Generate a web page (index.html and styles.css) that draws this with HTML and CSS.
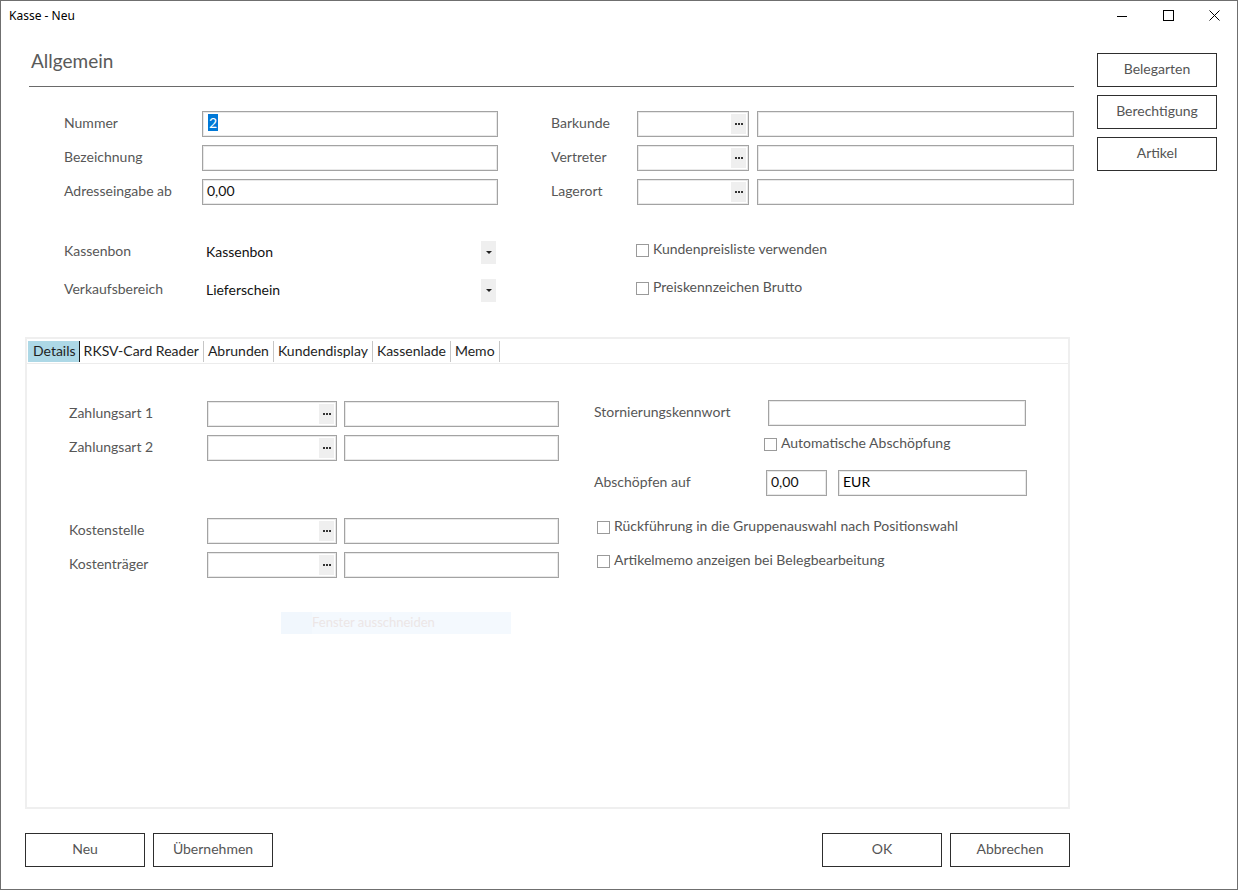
FILE: index.html
```html
<!DOCTYPE html>
<html lang="de">
<head>
<meta charset="utf-8">
<title>Kasse - Neu</title>
<link rel="stylesheet" href="styles.css">
</head>
<body>
<div class="window">
  <div class="titlebar">
    <span class="title">Kasse - Neu</span>
    <div class="controls">
      <span class="ctl"><svg width="10" height="10" viewBox="0 0 10 10"><path d="M0 5.5H10" stroke="#000" stroke-width="1"/></svg></span>
      <span class="ctl"><svg width="11" height="11" viewBox="0 0 11 11"><rect x="0.5" y="0.5" width="10" height="10" fill="none" stroke="#000" stroke-width="1"/></svg></span>
      <span class="ctl"><svg width="11" height="11" viewBox="0 0 11 11"><path d="M0.5 0.5L10.5 10.5M10.5 0.5L0.5 10.5" stroke="#000" stroke-width="1"/></svg></span>
    </div>
  </div>

  <div class="content">
    <div class="top">
      <div class="general">
        <h1 class="heading">Allgemein</h1>
        <div class="fields">
          <div class="row">
            <span class="lbl lbl-l">Nummer</span>
            <div class="input w296"><span class="sel">2</span></div>
            <span class="lbl lbl-r">Barkunde</span>
            <div class="input lookup w112"><span class="dots"><svg width="8" height="2" viewBox="0 0 8 2"><rect x="0" y="0" width="2" height="2" fill="#333"/><rect x="3" y="0" width="2" height="2" fill="#333"/><rect x="6" y="0" width="2" height="2" fill="#333"/></svg></span></div>
            <div class="input w317"></div>
          </div>
          <div class="row">
            <span class="lbl lbl-l">Bezeichnung</span>
            <div class="input w296"></div>
            <span class="lbl lbl-r">Vertreter</span>
            <div class="input lookup w112"><span class="dots"><svg width="8" height="2" viewBox="0 0 8 2"><rect x="0" y="0" width="2" height="2" fill="#333"/><rect x="3" y="0" width="2" height="2" fill="#333"/><rect x="6" y="0" width="2" height="2" fill="#333"/></svg></span></div>
            <div class="input w317"></div>
          </div>
          <div class="row">
            <span class="lbl lbl-l">Adresseingabe ab</span>
            <div class="input w296"><span class="val">0,00</span></div>
            <span class="lbl lbl-r">Lagerort</span>
            <div class="input lookup w112"><span class="dots"><svg width="8" height="2" viewBox="0 0 8 2"><rect x="0" y="0" width="2" height="2" fill="#333"/><rect x="3" y="0" width="2" height="2" fill="#333"/><rect x="6" y="0" width="2" height="2" fill="#333"/></svg></span></div>
            <div class="input w317"></div>
          </div>
        </div>
        <div class="options">
          <div class="orow">
            <span class="lbl lbl-l">Kassenbon</span>
            <div class="combo"><span class="combo-val">Kassenbon</span><span class="drop"></span></div>
            <label class="check check-top"><span class="box"></span><span class="ctext">Kundenpreisliste verwenden</span></label>
          </div>
          <div class="orow">
            <span class="lbl lbl-l">Verkaufsbereich</span>
            <div class="combo"><span class="combo-val">Lieferschein</span><span class="drop"></span></div>
            <label class="check check-top"><span class="box"></span><span class="ctext">Preiskennzeichen Brutto</span></label>
          </div>
        </div>
      </div>
      <div class="side">
        <button class="btn">Belegarten</button>
        <button class="btn">Berechtigung</button>
        <button class="btn">Artikel</button>
      </div>
    </div>

    <div class="panel">
      <div class="tabs">
        <span class="tab active">Details</span>
        <span class="tab">RKSV-Card Reader</span>
        <span class="tab">Abrunden</span>
        <span class="tab">Kundendisplay</span>
        <span class="tab">Kassenlade</span>
        <span class="tab">Memo</span>
      </div>
      <div class="panel-body">
        <div class="col-left">
          <div class="row">
            <span class="lbl lbl-p">Zahlungsart 1</span>
            <div class="input lookup w130"><span class="dots"><svg width="8" height="2" viewBox="0 0 8 2"><rect x="0" y="0" width="2" height="2" fill="#333"/><rect x="3" y="0" width="2" height="2" fill="#333"/><rect x="6" y="0" width="2" height="2" fill="#333"/></svg></span></div>
            <div class="input w215"></div>
          </div>
          <div class="row">
            <span class="lbl lbl-p">Zahlungsart 2</span>
            <div class="input lookup w130"><span class="dots"><svg width="8" height="2" viewBox="0 0 8 2"><rect x="0" y="0" width="2" height="2" fill="#333"/><rect x="3" y="0" width="2" height="2" fill="#333"/><rect x="6" y="0" width="2" height="2" fill="#333"/></svg></span></div>
            <div class="input w215"></div>
          </div>
          <div class="row row-gap">
            <span class="lbl lbl-p">Kostenstelle</span>
            <div class="input lookup w130"><span class="dots"><svg width="8" height="2" viewBox="0 0 8 2"><rect x="0" y="0" width="2" height="2" fill="#333"/><rect x="3" y="0" width="2" height="2" fill="#333"/><rect x="6" y="0" width="2" height="2" fill="#333"/></svg></span></div>
            <div class="input w215"></div>
          </div>
          <div class="row">
            <span class="lbl lbl-p">Kostenträger</span>
            <div class="input lookup w130"><span class="dots"><svg width="8" height="2" viewBox="0 0 8 2"><rect x="0" y="0" width="2" height="2" fill="#333"/><rect x="3" y="0" width="2" height="2" fill="#333"/><rect x="6" y="0" width="2" height="2" fill="#333"/></svg></span></div>
            <div class="input w215"></div>
          </div>
          <div class="snip"><span class="snip-icon"></span><span class="snip-text">Fenster ausschneiden</span></div>
        </div>
        <div class="col-right">
          <div class="row">
            <span class="lbl lbl-s">Stornierungskennwort</span>
            <div class="input w258"></div>
          </div>
          <label class="check check-auto"><span class="box"></span><span class="ctext">Automatische Abschöpfung</span></label>
          <div class="row row-abs">
            <span class="lbl lbl-a">Abschöpfen auf</span>
            <div class="input w61"><span class="val">0,00</span></div>
            <div class="input w189 eur"><span class="val">EUR</span></div>
          </div>
          <label class="check check-r1"><span class="box"></span><span class="ctext">Rückführung in die Gruppenauswahl nach Positionswahl</span></label>
          <label class="check check-r2"><span class="box"></span><span class="ctext">Artikelmemo anzeigen bei Belegbearbeitung</span></label>
        </div>
      </div>
    </div>

    <div class="footer">
      <div class="btn-group">
        <button class="btn">Neu</button>
        <button class="btn">Übernehmen</button>
      </div>
      <div class="btn-group">
        <button class="btn">OK</button>
        <button class="btn">Abbrechen</button>
      </div>
    </div>
  </div>
</div>
</body>
</html>
```

FILE: styles.css
```css
* { box-sizing: border-box; }

html, body {
  margin: 0;
  padding: 0;
  background: #ffffff;
}

body {
  font-family: Lato, "Open Sans", sans-serif;
  font-size: 14px;
  color: #555;
}

.window {
  width: 1238px;
  height: 890px;
  border: 1px solid #6f6f6f;
  background: #fff;
  overflow: hidden;
}

/* title bar */
.titlebar {
  height: 29px;
  display: flex;
  align-items: center;
  justify-content: space-between;
}

.title {
  font-family: "Noto Sans", "Liberation Sans", sans-serif;
  font-size: 12px;
  color: #000;
  padding-left: 8px;
  padding-bottom: 1px;
}

.controls {
  display: flex;
  height: 29px;
}

.ctl {
  width: 46px;
  height: 29px;
  display: flex;
  align-items: center;
  justify-content: center;
}

/* content */
.content {
  padding: 0 0 0 24px;
}

.top {
  display: flex;
  align-items: flex-start;
}

.general {
  margin-left: 4px;
  width: 1045px;
}

.heading {
  margin: 19px 0 0 0;
  padding: 0 0 13px 2px;
  font-size: 19px;
  line-height: 23px;
  height: 38px;
  font-weight: normal;
  color: #5a5a5a;
  border-bottom: 1px solid #6a6a6a;
}

.fields {
  margin-top: 24px;
  display: flex;
  flex-direction: column;
  gap: 8px;
}

.row {
  display: flex;
  align-items: center;
  height: 26px;
}

.lbl {
  color: #575757;
  white-space: nowrap;
  padding-bottom: 4px;
}

.lbl-l { width: 173px; padding-left: 35px; }
.lbl-r { width: 86px; margin-left: 53px; }
.lbl-p { width: 138px; }
.lbl-s { width: 174px; }
.lbl-a { width: 172px; }

.input {
  height: 26px;
  border: 1px solid #a3a3a3;
  box-shadow: inset 0 0 0 1px #e9e9e9;
  background: #fff;
  color: #111;
  padding: 0 4px;
  display: flex;
  align-items: center;
  flex: none;
}

.val { padding-bottom: 4px; }

.w296 { width: 296px; }
.w112 { width: 112px; }
.w317 { width: 317px; margin-left: 8px; }
.w130 { width: 130px; }
.w215 { width: 215px; margin-left: 7px; }
.w258 { width: 258px; }
.w61 { width: 61px; }
.w189 { width: 189px; margin-left: 11px; }

.eur { color: #000; font-weight: normal; }

.sel {
  background: #0078d7;
  color: #fff;
  padding: 0 1px;
  line-height: 17px;
  margin-left: 1px;
  margin-bottom: 3px;
}

.lookup {
  justify-content: flex-end;
  padding: 2px;
}

.dots {
  width: 15px;
  height: 20px;
  background: #efefef;
  display: flex;
  align-items: center;
  justify-content: center;
}

.dots svg { display: block; }

/* options */
.options {
  margin-top: 36px;
  display: flex;
  flex-direction: column;
  gap: 15px;
}

.orow {
  display: flex;
  align-items: center;
  height: 23px;
}

.combo {
  width: 296px;
  height: 23px;
  display: flex;
  align-items: center;
  justify-content: space-between;
  padding: 0 2px 0 4px;
  color: #111;
  flex: none;
}

.combo-val { margin-top: -2px; }

.drop {
  width: 15px;
  height: 23px;
  background: #efefef;
  position: relative;
}

.drop::after {
  content: "";
  position: absolute;
  left: 5px;
  top: 10px;
  border-left: 3px solid transparent;
  border-right: 3px solid transparent;
  border-top: 3px solid #222;
}

.check {
  display: flex;
  align-items: center;
  gap: 4px;
  color: #555;
  white-space: nowrap;
  height: 20px;
}

.ctext { padding-bottom: 3px; }

.box {
  width: 13px;
  height: 13px;
  border: 1px solid #9a9a9a;
  background: #fff;
  flex: none;
}

.check-top {
  margin-left: 138px;
  margin-bottom: 5px;
}

/* side buttons */
.side {
  margin-left: 23px;
  margin-top: 23px;
  display: flex;
  flex-direction: column;
  gap: 8px;
}

.btn {
  width: 120px;
  height: 34px;
  border: 1px solid #2e2e2e;
  background: #fff;
  font-family: Lato, "Open Sans", sans-serif;
  font-size: 14px;
  color: #555;
  padding: 0 0 4px 0;
  margin: 0;
}

/* panel */
.panel {
  margin-top: 35px;
  width: 1045px;
  height: 472px;
  border: 2px solid #efefef;
}

.tabs {
  display: flex;
  padding: 2px 1px 1px 1px;
  border-bottom: 1px solid #ececec;
}

.tab {
  height: 21px;
  line-height: 19px;
  padding: 0 4px;
  color: #1e1e1e;
  border-right: 1px solid #c6c6c6;
  white-space: nowrap;
}

.tab.active {
  background: #add8e6;
  border-right: 1px solid #1a1a1a;
  padding: 0 3px 0 5px;
}

.panel-body {
  display: flex;
  padding: 36px 0 0 42px;
}

.col-left {
  margin-top: 1px;
  width: 490px;
  display: flex;
  flex-direction: column;
  gap: 8px;
}

.row-gap { margin-top: 49px; }

.snip {
  margin-top: 26px;
  margin-left: 212px;
  width: 230px;
  height: 22px;
  background: #f4f9fe;
  display: flex;
  align-items: center;
}

.snip-icon {
  width: 31px;
  height: 22px;
  background: #f1f7fd;
}

.snip-text {
  color: #ece6e6;
  font-size: 13px;
  padding-bottom: 2px;
}

.col-right {
  margin-left: 35px;
  display: flex;
  flex-direction: column;
}

.check-auto {
  margin-top: 8px;
  margin-left: 170px;
}

.row-abs { margin-top: 16px; }

.check-r1 {
  margin-top: 21px;
  margin-left: 3px;
}

.check-r2 {
  margin-top: 14px;
  margin-left: 3px;
}

/* footer */
.footer {
  margin-top: 24px;
  width: 1045px;
  display: flex;
  justify-content: space-between;
}

.btn-group {
  display: flex;
  gap: 8px;
}
```
